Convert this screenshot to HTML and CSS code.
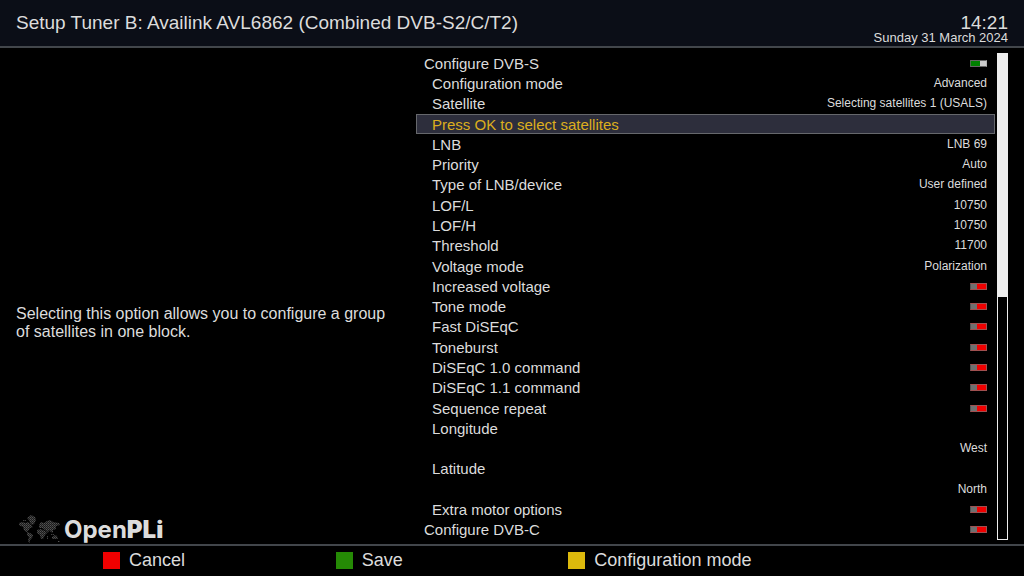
FILE: index.html
```html
<!DOCTYPE html>
<html lang="en">
  <head>
    <meta charset="UTF-8" />
    <meta name="viewport" content="width=device-width, initial-scale=1.0" />
    <title>Setup Tuner B</title>
    <link rel="stylesheet" href="styles.css">
  </head>
  <body>
    <header class="header">
      <h1 class="title">Setup Tuner B: Availink AVL6862 (Combined DVB-S2/C/T2)</h1>
      <div class="clock">
        <div class="time">14:21</div>
        <div class="date">Sunday 31 March 2024</div>
      </div>
    </header>
    <main class="main">
      <div class="side">
        <p class="description">Selecting this option allows you to configure a group of satellites in one block.</p>
        <div class="logo">
          <svg class="map" width="44" height="28" viewBox="0 0 44 28">
            <defs>
              <pattern id="dots" width="2" height="2" patternUnits="userSpaceOnUse">
                <rect width="2" height="2" fill="#1c1c1c" />
                <rect width="1" height="1" fill="#545454" />
                <rect x="1" y="1" width="1" height="1" fill="#404040" />
              </pattern>
            </defs>
            <g fill="url(#dots)">
              <path d="M1 8 L4 7 L8 8 L10 7 L13 10 L15 12 L12 13 L10 16 L8 17 L6 15 L5 12 L1 10Z" />
              <path d="M9 3 L13 0 L17 2 L18 5 L16 9 L14 10 L12 8 L11 5Z" />
              <path d="M9 17 L12 18 L15 20 L14 23 L12 25 L12 28 L10 26 L11 22 L9 20Z" />
              <path d="M21 10 L23 7 L26 8 L29 6 L32 5 L35 7 L41 8 L42 10 L38 11 L38 14 L35 15 L35 18 L33 17 L31 15 L30 18 L27 15 L24 13 L21 13Z" />
              <path d="M19 15 L23 14 L27 16 L29 18 L27 20 L25 24 L23 24 L22 20 L19 18Z" />
              <path d="M34 22 L37 20 L39 21 L40 24 L37 24 L34 24Z" />
              <path d="M40 26h2v1h-2z M33 19h3v1h-3z M29 21h1v3h-1z M5 5h3v1h-3z" />
            </g>
          </svg>
          <span class="name">Open<strong>PLi</strong></span>
        </div>
      </div>
      <div class="settings">
        <div class="list">
          <label class="row top"><span>Configure DVB-S</span><input class="switch" type="checkbox" checked></label>
          <div class="row"><span>Configuration mode</span><span class="value">Advanced</span></div>
          <div class="row"><span>Satellite</span><span class="value">Selecting satellites 1 (USALS)</span></div>
          <div class="row selected"><span>Press OK to select satellites</span></div>
          <div class="row"><span>LNB</span><span class="value">LNB 69</span></div>
          <div class="row"><span>Priority</span><span class="value">Auto</span></div>
          <div class="row"><span>Type of LNB/device</span><span class="value">User defined</span></div>
          <div class="row"><span>LOF/L</span><span class="value">10750</span></div>
          <div class="row"><span>LOF/H</span><span class="value">10750</span></div>
          <div class="row"><span>Threshold</span><span class="value">11700</span></div>
          <div class="row"><span>Voltage mode</span><span class="value">Polarization</span></div>
          <label class="row"><span>Increased voltage</span><input class="switch" type="checkbox"></label>
          <label class="row"><span>Tone mode</span><input class="switch" type="checkbox"></label>
          <label class="row"><span>Fast DiSEqC</span><input class="switch" type="checkbox"></label>
          <label class="row"><span>Toneburst</span><input class="switch" type="checkbox"></label>
          <label class="row"><span>DiSEqC 1.0 command</span><input class="switch" type="checkbox"></label>
          <label class="row"><span>DiSEqC 1.1 command</span><input class="switch" type="checkbox"></label>
          <label class="row"><span>Sequence repeat</span><input class="switch" type="checkbox"></label>
          <div class="row"><span>Longitude</span></div>
          <div class="row"><span></span><span class="value">West</span></div>
          <div class="row"><span>Latitude</span></div>
          <div class="row"><span></span><span class="value">North</span></div>
          <label class="row"><span>Extra motor options</span><input class="switch" type="checkbox"></label>
          <label class="row top"><span>Configure DVB-C</span><input class="switch" type="checkbox"></label>
        </div>
        <div class="scrollbar"><div class="thumb"></div></div>
      </div>
    </main>
    <footer class="footer">
      <button class="btn red" type="button">Cancel</button>
      <button class="btn green" type="button">Save</button>
      <button class="btn yellow" type="button">Configuration mode</button>
    </footer>
  </body>
</html>
```
FILE: styles.css
```css
* {
  margin: 0;
  padding: 0;
  box-sizing: border-box;
}
body {
  font-family: "Liberation Sans", Arial, sans-serif;
  min-height: 100vh;
  background-color: #000;
  color: #dcdcdc;
  display: flex;
  flex-direction: column;
}
.header {
  display: flex;
  justify-content: space-between;
  align-items: center;
  height: 48px;
  padding: 0 16px;
  background-color: #0b0e17;
  border-bottom: 2px solid #42464b;
}
.title {
  font-size: 19px;
  font-weight: normal;
}
.clock {
  text-align: right;
  padding-top: 12px;
}
.time {
  font-size: 19px;
  line-height: 16px;
}
.date {
  font-size: 13px;
  line-height: 13px;
}
.main {
  flex: 1;
  display: grid;
  grid-template-columns: 13fr 19fr;
}
.side {
  display: flex;
  flex-direction: column;
  justify-content: space-between;
  padding-left: 16px;
}
.description {
  font-size: 16px;
  line-height: 18px;
  margin: auto 24px auto 0;
  padding-top: 84px;
}
.logo {
  display: flex;
  align-items: center;
  gap: 2px;
  height: 30px;
  padding-left: 2px;
}
.name {
  font-family: Inter, sans-serif;
  font-size: 24px;
  font-weight: 700;
}
.name strong {
  font-weight: 900;
}
.settings {
  display: flex;
  gap: 2px;
  padding: 5px 16px 4px 0;
}
.list {
  flex: 1;
  display: grid;
  grid-auto-rows: 1fr;
}
.row {
  display: flex;
  justify-content: space-between;
  align-items: center;
  padding: 0 8px 0 16px;
  font-size: 15px;
  line-height: 17px;
}
.top {
  padding-left: 8px;
}
.selected {
  padding: 0 7px 0 15px;
  background-color: #2d2e3c;
  border: 1px solid #66686c;
  color: #dcae1e;
}
.value {
  font-size: 12px;
}
.switch {
  appearance: none;
  width: 17px;
  height: 7px;
  border: 1px solid #a05050;
  border-left-color: #555;
  background: linear-gradient(to right, #707070 6px, #f00000 6px);
}
.switch:checked {
  border-color: #666 #b4b4b4 #666 #4c704c;
  background: linear-gradient(to right, #008000 9px, #ccc 9px);
}
.scrollbar {
  width: 11px;
  border: 1px solid #eee;
}
.thumb {
  height: 50%;
  background-color: #eee;
}
.footer {
  display: grid;
  grid-template-columns: repeat(3, 1fr);
  height: 32px;
  padding: 0 223px 2px 103px;
  border-top: 2px solid #42464b;
}
.btn {
  display: flex;
  align-items: center;
  gap: 9px;
  border: none;
  background: none;
  color: inherit;
  font-family: inherit;
  font-size: 18px;
  white-space: nowrap;
  cursor: pointer;
}
.btn::before {
  content: "";
  width: 17px;
  height: 17px;
}
.red::before {
  background-color: #f00000;
}
.green::before {
  background-color: #258a05;
}
.yellow::before {
  background-color: #dcb90c;
}
```
